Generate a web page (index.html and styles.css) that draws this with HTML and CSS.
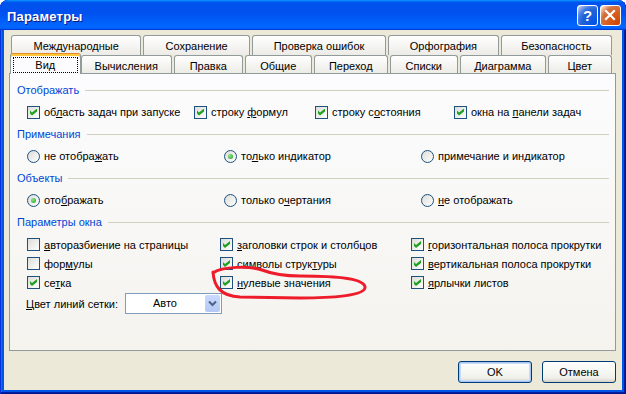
FILE: index.html
```html
<!DOCTYPE html>
<html lang="ru">
<head>
  <meta charset="UTF-8">
  <title>Параметры</title>
  <link rel="stylesheet" href="styles.css">
</head>
<body>

<div class="window">
  <div class="titlebar">
    <span class="title">Параметры</span>
    <div class="title-btns">
      <span class="tb-btn help">?</span>
      <span class="tb-btn close">
        <svg width="21" height="21" viewBox="0 0 21 21"><path d="M6 6 L14 14 M14 6 L6 14" stroke="#fff" stroke-width="2.2" stroke-linecap="square"/></svg>
      </span>
    </div>
  </div>

  <div class="client">
    <div class="tabs">
      <div class="tab-row back">
        <span class="tab">Международные</span>
        <span class="tab">Сохранение</span>
        <span class="tab">Проверка ошибок</span>
        <span class="tab">Орфография</span>
        <span class="tab">Безопасность</span>
      </div>
      <div class="tab-row front">
        <span class="tab active"><span class="focus">Вид</span></span>
        <span class="tab">Вычисления</span>
        <span class="tab">Правка</span>
        <span class="tab">Общие</span>
        <span class="tab">Переход</span>
        <span class="tab">Списки</span>
        <span class="tab">Диаграмма</span>
        <span class="tab">Цвет</span>
      </div>
    </div>

    <div class="panel">
      <div class="legend">Отображать</div>
      <div class="opts show">
        <label class="opt"><span class="cb on"></span><span>об<u>л</u>асть задач при запуске</span></label>
        <label class="opt"><span class="cb on"></span><span>строку <u>ф</u>ормул</span></label>
        <label class="opt"><span class="cb on"></span><span>строку с<u>о</u>стояния</span></label>
        <label class="opt"><span class="cb on"></span><span>окна на <u>п</u>анели задач</span></label>
      </div>

      <div class="legend">Примечания</div>
      <div class="opts radio">
        <label class="opt"><span class="rb"></span><span>не отобра<u>ж</u>ать</span></label>
        <label class="opt"><span class="rb on"></span><span>то<u>л</u>ько индикатор</span></label>
        <label class="opt"><span class="rb"></span><span>примечание и ин<u>д</u>икатор</span></label>
      </div>

      <div class="legend">Объекты</div>
      <div class="opts radio">
        <label class="opt"><span class="rb on"></span><span>ото<u>б</u>ражать</span></label>
        <label class="opt"><span class="rb"></span><span>только о<u>ч</u>ертания</span></label>
        <label class="opt"><span class="rb"></span><span><u>н</u>е отображать</span></label>
      </div>

      <div class="legend">Параметры окна</div>
      <div class="opts win">
        <label class="opt"><span class="cb"></span><span><u>а</u>вторазбиение на страницы</span></label>
        <label class="opt"><span class="cb on"></span><span><u>з</u>аголовки строк и столбцов</span></label>
        <label class="opt"><span class="cb on"></span><span><u>г</u>оризонтальная полоса прокрутки</span></label>
        <label class="opt"><span class="cb"></span><span>фор<u>м</u>улы</span></label>
        <label class="opt"><span class="cb on"></span><span>символы струк<u>т</u>уры</span></label>
        <label class="opt"><span class="cb on"></span><span><u>в</u>ертикальная полоса прокрутки</span></label>
        <label class="opt"><span class="cb on"></span><span>се<u>т</u>ка</span></label>
        <label class="opt"><span class="cb on"></span><span><u>н</u>улевые значения</span></label>
        <label class="opt"><span class="cb on"></span><span><u>я</u>рлычки листов</span></label>
      </div>

      <div class="grid-color">
        <span class="combo-label"><u>Ц</u>вет линий сетки:</span>
        <div class="combo">
          <span class="combo-text">Авто</span>
          <span class="combo-btn">
            <svg width="9" height="7" viewBox="0 0 9 7"><path d="M1 1.5 L4.5 5 L8 1.5" fill="none" stroke="#4d6185" stroke-width="2"/></svg>
          </span>
        </div>
      </div>
    </div>

    <div class="buttons">
      <button class="btn default">OK</button>
      <button class="btn">Отмена</button>
    </div>
  </div>

  <svg class="annot" width="175" height="45" viewBox="0 0 175 45">
    <path d="M13 12 C14 26 20 36 40 37 L100 38 C130 38 166 36 165 27 C164 19 140 16 100 16 C85 16 75 15 62 10 C50 6 22 6 13 13" fill="none" stroke="#ee1c2a" stroke-width="3" stroke-linecap="round"/>
  </svg>
</div>

</body>
</html>
```

FILE: styles.css
```css
body {
  margin: 0;
  font-family: "Liberation Sans", Arial, sans-serif;
  font-size: 11px;
  color: #000;
  background: #fff;
}

.window {
  position: relative;
  width: 626px;
  height: 394px;
  display: flex;
  flex-direction: column;
  background: #0055e5;
  border-radius: 8px 8px 0 0;
  box-shadow: inset 1px 1px #0831d9, inset -1px -1px #00138c, inset -2px -2px #001ea0, inset 2px 2px #166aee;
  overflow: hidden;
}

/* title bar */

.titlebar {
  flex: none;
  height: 30px;
  display: flex;
  align-items: center;
  justify-content: space-between;
  padding: 0 5px 0 7px;
  border-radius: 8px 8px 0 0;
  background: linear-gradient(to bottom, #0997ff 0%, #0053ee 8%, #0050ee 40%, #0066ff 88%, #0066ff 93%, #005bff 95%, #003dd7 96%, #003dd7 100%);
}

.title {
  padding-top: 2px;
  color: #fff;
  font-weight: bold;
  font-size: 13px;
  letter-spacing: 0.2px;
  text-shadow: 1px 1px #0a1883;
}

.title-btns {
  display: flex;
  gap: 2px;
}

.tb-btn {
  width: 21px;
  height: 21px;
  box-sizing: border-box;
  border: 1px solid #fff;
  border-radius: 3px;
  display: flex;
  align-items: center;
  justify-content: center;
}

.tb-btn.help {
  background: radial-gradient(circle at 90% 90%, #0054e9 0, #2263d5 55%, #4479e4 70%, #a3bbec 90%, #fff 100%);
  color: #fff;
  font-weight: bold;
  font-size: 15px;
}

.tb-btn.close {
  background: radial-gradient(circle at 90% 90%, #cc4600 0, #dc6527 55%, #cd7546 70%, #ffccb2 90%, #fff 100%);
}

.tb-btn.close svg {
  margin: -1px;
}

/* client area */

.client {
  flex: 1;
  margin: 0 4px 4px;
  padding: 5px 6px 7px 5px;
  display: flex;
  flex-direction: column;
  background: #ece9d8;
}

.tab-row {
  display: flex;
  gap: 2px;
  height: 20px;
  padding: 0 4px 0 2px;
}

.tab-row.front {
  height: 18px;
  padding-left: 3px;
}

.tab {
  flex: 1 1 auto;
  min-width: 0;
  box-sizing: border-box;
  padding: 2px 4px 0;
  line-height: 16px;
  text-align: center;
  white-space: nowrap;
  border: 1px solid #919b9c;
  border-bottom: none;
  border-radius: 3px 3px 0 0;
  background: linear-gradient(#fff, #ecebe6);
}

/* tab widths as Windows laid them out */
.back .tab:nth-child(1) { flex-basis: 130px; }
.back .tab:nth-child(2) { flex-basis: 106px; }
.back .tab:nth-child(3) { flex-basis: 134px; }
.back .tab:nth-child(4) { flex-basis: 110px; }
.back .tab:nth-child(5) { flex-basis: 111px; }

.front .tab:nth-child(1) { flex-basis: 70px; }
.front .tab:nth-child(2) { flex-basis: 91px; }
.front .tab:nth-child(3) { flex-basis: 68px; }
.front .tab:nth-child(4) { flex-basis: 67px; }
.front .tab:nth-child(5) { flex-basis: 73px; }
.front .tab:nth-child(6) { flex-basis: 68px; }
.front .tab:nth-child(7) { flex-basis: 85px; }
.front .tab:nth-child(8) { flex-basis: 64px; }

.tab.active {
  position: relative;
  z-index: 1;
  margin: -2px -2px -1px;
  padding: 2px 2px 0;
  border-top: 1px solid #e68b2c;
  background: #fcfcfe;
  box-shadow: inset 0 2px #ffc73c;
}

.focus {
  display: block;
  margin-top: 1px;
  line-height: 14px;
  border: 1px dotted #000;
}

.panel {
  flex: 1;
  padding: 8px 6px 0 0;
  border: 1px solid #919b9c;
  background: linear-gradient(#fcfcfe, #f4f3ee);
}

.legend {
  display: flex;
  align-items: center;
  height: 16px;
  margin-top: 4px;
  padding-left: 7px;
  color: #0046d5;
}

.legend:first-child {
  margin-top: 0;
}

.legend::after {
  content: "";
  flex: 1;
  height: 1px;
  margin-left: 6px;
  background: #d0d0bf;
}

.opts {
  display: grid;
  align-items: center;
  height: 20px;
  margin-top: 4px;
  padding-left: 17px;
}

.opts.show {
  grid-template-columns: 167px 121px 139px auto;
}

.opts.radio {
  grid-template-columns: 197px 197px auto;
}

.opts.win {
  height: auto;
  margin-top: 5px;
  grid-template-columns: 193px 191px auto;
  grid-auto-rows: 19px;
}

.opt {
  display: flex;
  align-items: center;
  gap: 4px;
  white-space: nowrap;
}

.cb,
.rb {
  flex: none;
  width: 13px;
  height: 13px;
  box-sizing: border-box;
  border: 1px solid #1c5180;
  background: linear-gradient(135deg, #dcdcd7, #fff);
  display: flex;
  align-items: center;
  justify-content: center;
}

.cb.on::after {
  content: "";
  width: 7px;
  height: 7px;
  background: #21a121;
  clip-path: polygon(0 28.6%, 28.6% 57%, 100% 0, 100% 43%, 28.6% 100%, 0 71.4%);
}

.rb {
  border-radius: 50%;
}

.rb.on::after {
  content: "";
  width: 5px;
  height: 5px;
  border-radius: 50%;
  background: radial-gradient(circle at 35% 35%, #8ce38a, #21a121);
}

.grid-color {
  display: flex;
  align-items: center;
  height: 21px;
  margin-top: 1px;
  padding-left: 16px;
}

.combo-label {
  width: 99px;
  white-space: nowrap;
}

.combo {
  width: 97px;
  height: 21px;
  box-sizing: border-box;
  display: flex;
  border: 1px solid #7f9db9;
  background: #fff;
}

.combo-text {
  flex: 1;
  line-height: 19px;
  text-align: center;
}

.combo-btn {
  width: 15px;
  margin: 1px;
  border-radius: 2px;
  display: flex;
  align-items: center;
  justify-content: center;
  background: linear-gradient(#c9dafd, #b3c8f5);
}

.buttons {
  display: flex;
  justify-content: flex-end;
  gap: 10px;
  margin-top: 10px;
}

.btn {
  width: 74px;
  height: 22px;
  font: inherit;
  color: #000;
  border: 1px solid #003c74;
  border-radius: 3px;
  background: linear-gradient(#fff, #f0f0ea 80%, #d6d0c5);
}

.btn.default {
  box-shadow: inset 0 0 0 1px #a8c6f4, inset 0 0 0 2px #c7dcfa;
}

/* hand-drawn mark over the dialog */
.annot {
  position: absolute;
  left: 200px;
  top: 260px;
}
```
